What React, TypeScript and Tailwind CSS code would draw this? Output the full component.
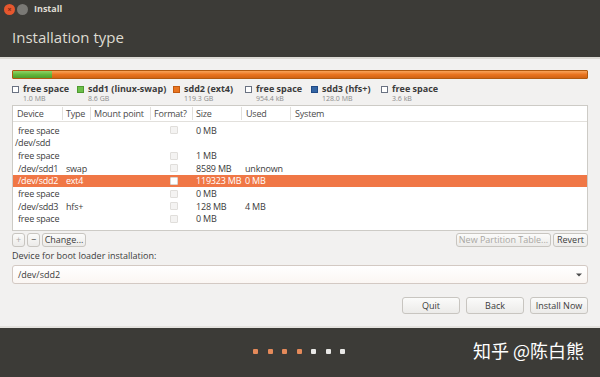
import React from 'react';

const font = { fontFamily: '"Open Sans", "Noto Sans", sans-serif' };

interface Row {
  device: string;
  type?: string;
  size?: string;
  used?: string;
  check?: boolean;
  indent?: boolean;
  selected?: boolean;
}

const rows: Row[] = [
  { device: 'free space', size: '0 MB', check: true, indent: true },
  { device: '/dev/sdd' },
  { device: 'free space', size: '1 MB', check: true, indent: true },
  { device: '/dev/sdd1', type: 'swap', size: '8589 MB', used: 'unknown', check: true, indent: true },
  { device: '/dev/sdd2', type: 'ext4', size: '119323 MB', used: '0 MB', check: true, indent: true, selected: true },
  { device: 'free space', size: '0 MB', check: true, indent: true },
  { device: '/dev/sdd3', type: 'hfs+', size: '128 MB', used: '4 MB', check: true, indent: true },
  { device: 'free space', size: '0 MB', check: true, indent: true },
];

const legend = [
  { swatch: 'border border-gray-500 bg-white', label: 'free space', size: '1.0 MB', w: 'w-[65px]' },
  { swatch: 'bg-[#6cc04a] border border-[#4f9a31]', label: 'sdd1 (linux-swap)', size: '8.6 GB', w: 'w-[96px]' },
  { swatch: 'bg-[#e9741f] border border-[#c25a10]', label: 'sdd2 (ext4)', size: '119.3 GB', w: 'w-[72px]' },
  { swatch: 'border border-gray-500 bg-white', label: 'free space', size: '954.4 kB', w: 'w-[66px]' },
  { swatch: 'bg-[#3465a4] border border-[#204a87]', label: 'sdd3 (hfs+)', size: '128.0 MB', w: 'w-[70px]' },
  { swatch: 'border border-gray-500 bg-white', label: 'free space', size: '3.6 kB', w: 'w-[65px]' },
];

const Btn: React.FC<{ children: React.ReactNode; className?: string; disabled?: boolean }> = ({ children, className = '', disabled }) => (
  <div
    className={`flex items-center justify-center rounded-[3px] border border-[#c8c5c0] bg-gradient-to-b from-[#fbfbfa] to-[#ecebe9] text-[9px] ${disabled ? 'text-[#a9a7a3]' : 'text-[#3c3c3c]'} ${className}`}
  >
    {children}
  </div>
);

const App: React.FC = () => {
  return (
    <div className="w-[600px] h-[377px] overflow-hidden bg-[#f2f1f0] flex flex-col" style={font}>
      {/* header */}
      <div className="h-[57px] bg-[#3c3b37] flex flex-col">
        <div className="h-[18px] flex items-center pl-[4px]">
          <div className="w-[11px] h-[11px] rounded-full bg-[#e6572e] flex items-center justify-center">
            <span className="text-[7px] leading-none text-[#7a2610] font-bold">×</span>
          </div>
          <div className="w-[11px] h-[11px] rounded-full bg-[#7a7975] ml-[2px]" />
          <span className="ml-[6px] text-[9px] font-bold text-[#dfdbd2]">Install</span>
        </div>
        <div className="pl-[12px] pt-[12px] text-[15px] leading-none text-[#dfdbd2]">Installation type</div>
      </div>
      <div className="h-[2px] bg-[#dcdad5]" />

      <div className="flex-1 flex flex-col px-[12px] pt-[11px]">
        {/* partition bar */}
        <div className="h-[9px] flex rounded-[1px] overflow-hidden border border-[#b05a10]">
          <div className="w-[39px] bg-gradient-to-b from-[#8fd466] via-[#64b83c] to-[#4f9e2c]" />
          <div className="flex-1 bg-gradient-to-b from-[#f8a357] via-[#e9741f] to-[#d26414]" />
        </div>

        {/* legend */}
        <div className="flex mt-[5px] text-[9px] leading-[10px]">
          {legend.map((l, i) => (
            <div key={i} className={`flex shrink-0 ${l.w}`}>
              <div className={`w-[7px] h-[7px] mt-[2px] ${l.swatch}`} />
              <div className="ml-[4px]">
                <div className="font-bold text-[#3c3c3c] whitespace-nowrap">{l.label}</div>
                <div className="text-[7px] leading-[9px] text-[#8a8a8a]">{l.size}</div>
              </div>
            </div>
          ))}
        </div>

        {/* table */}
        <div className="mt-[2px] h-[126px] bg-white border border-[#cdcbc6] text-[9px] tracking-[-0.2px] text-[#3c3c3c] flex flex-col">
          <div className="h-[16px] flex items-center border-b border-[#e2e0dc] text-[#4a4a4a]">
            <div className="w-[50px] pl-[4px] border-r border-[#e2e0dc]">Device</div>
            <div className="w-[28px] pl-[3px] border-r border-[#e2e0dc]">Type</div>
            <div className="w-[60px] pl-[3px] border-r border-[#e2e0dc]">Mount point</div>
            <div className="w-[42px] pl-[3px] border-r border-[#e2e0dc]">Format?</div>
            <div className="w-[49px] pl-[3px] border-r border-[#e2e0dc]">Size</div>
            <div className="w-[49px] pl-[4px] border-r border-[#e2e0dc]">Used</div>
            <div className="flex-1 pl-[4px]">System</div>
          </div>
          <div className="pt-[2px] flex flex-col">
            {rows.map((r, i) => (
              <div
                key={i}
                className={`h-[12.7px] flex items-center ${r.selected ? 'bg-[#f07746] text-white' : ''}`}
              >
                <div className={`w-[50px] ${r.indent ? 'pl-[5px]' : 'pl-[2px]'} whitespace-nowrap`}>{r.device}</div>
                <div className="w-[28px] pl-[3px]">{r.type}</div>
                <div className="w-[60px]" />
                <div className="w-[42px] flex justify-center pl-[4px]">
                  {r.check && (
                    <div
                      className={`w-[8px] h-[8px] rounded-[1px] border ${r.selected ? 'border-[#d9d6d2] bg-white' : 'border-[#e0dedb] bg-[#f4f3f2]'}`}
                    />
                  )}
                </div>
                <div className="w-[50px] pl-[3px] whitespace-nowrap">{r.size}</div>
                <div className="w-[48px] pl-[2px]">{r.used}</div>
                <div className="flex-1" />
              </div>
            ))}
          </div>
        </div>

        {/* table buttons */}
        <div className="mt-[1px] h-[15px] flex items-center">
          <Btn className="w-[13px] h-[14px] text-[#9a9894]" disabled>
            +
          </Btn>
          <Btn className="w-[13px] h-[14px] ml-[2px]">−</Btn>
          <Btn className="w-[44px] h-[14px] ml-[2px]">Change...</Btn>
          <div className="flex-1" />
          <Btn className="w-[95px] h-[14px]" disabled>
            New Partition Table...
          </Btn>
          <Btn className="w-[35px] h-[14px] ml-[2px]">Revert</Btn>
        </div>

        <div className="mt-[3px] text-[9px] leading-[12px] text-[#3c3c3c]">Device for boot loader installation:</div>

        <div className="mt-[3px] h-[19px] rounded-[3px] border border-[#d3c9c3] bg-gradient-to-b from-[#ffffff] to-[#fbf6f3] flex items-center px-[5px] text-[9px] text-[#3c3c3c]">
          <span className="flex-1">/dev/sdd2</span>
          <svg width="6" height="4" viewBox="0 0 6 4">
            <path d="M0 0.5 L6 0.5 L3 3.5 Z" fill="#4a4a4a" />
          </svg>
        </div>

        <div className="mt-[13px] flex justify-end">
          <Btn className="w-[58px] h-[17px]">Quit</Btn>
          <Btn className="w-[58px] h-[17px] ml-[6px]">Back</Btn>
          <Btn className="w-[58px] h-[17px] ml-[6px]">Install Now</Btn>
        </div>
      </div>

      {/* footer */}
      <div className="h-[2px] bg-[#e4e2de]" />
      <div className="h-[49px] bg-[#3c3b37] flex items-start pt-[21px] relative">
        <div className="flex gap-[9.5px] ml-[253px]">
          {[0, 1, 2, 3, 4, 5, 6].map((i) => (
            <div
              key={i}
              className={`w-[5px] h-[5px] rounded-[1px] ${i < 4 ? 'bg-[#e58a5a]' : 'bg-[#e8e8e6]'}`}
            />
          ))}
        </div>
        <div
          className="absolute right-[16px] top-[13px] text-[18px] text-white leading-none"
          style={{ fontFamily: '"Noto Sans CJK SC", "Noto Sans", sans-serif' }}
        >
          知乎 @陈白熊
        </div>
      </div>
    </div>
  );
};

export default App;
